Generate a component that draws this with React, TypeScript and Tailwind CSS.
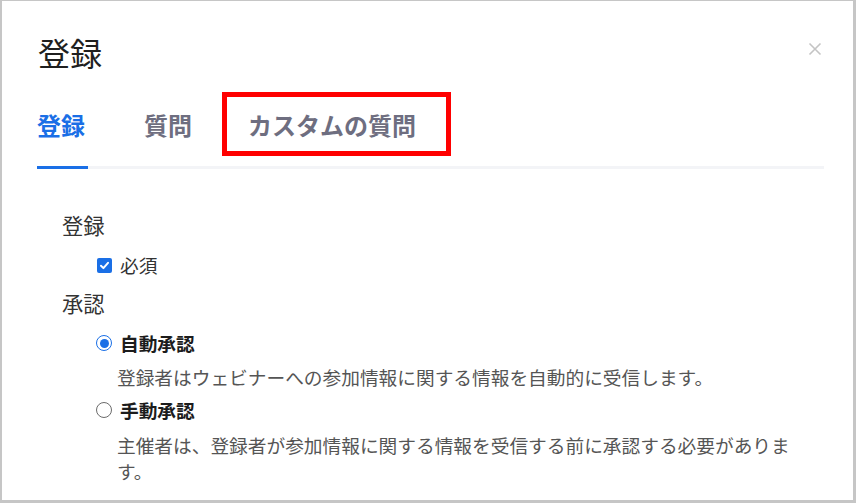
import React from 'react';

const font = "font-['Noto_Sans_CJK_JP','Noto_Sans',sans-serif]";

const CheckBox: React.FC = () => (
  <span className="w-[15px] h-[15px] rounded-[2px] bg-[#1a6fe6] flex items-center justify-center">
    <svg width="11" height="11" viewBox="0 0 10 10" fill="none" stroke="white" strokeWidth="1.8" strokeLinecap="round" strokeLinejoin="round">
      <path d="M1.8 5.2 L4 7.4 L8.2 2.6" />
    </svg>
  </span>
);

const Radio: React.FC<{ checked?: boolean }> = ({ checked }) =>
  checked ? (
    <span className="w-[16px] h-[16px] rounded-full border-[1.5px] border-[#1a6fe6] flex items-center justify-center">
      <span className="w-[9px] h-[9px] rounded-full bg-[#1a6fe6]" />
    </span>
  ) : (
    <span className="w-[16px] h-[16px] rounded-full border-[1.5px] border-[#6b6b6b]" />
  );

const App: React.FC = () => {
  return (
    <div className={`relative w-[856px] h-[503px] bg-white border-l-2 border-t border-r-[3px] border-b-[3px] border-[#c6c6c6] overflow-hidden ${font}`}>
      {/* header */}
      <div className="flex justify-between items-start pt-[27px] pl-[36px] pr-[31px]">
        <h1 className="text-[32px] leading-[48px] text-[#1f1f1f] font-normal">登録</h1>
        <svg className="mt-[14px]" width="14" height="14" viewBox="0 0 14 14" stroke="#c4c4c4" strokeWidth="1.6">
          <path d="M1.5 1.5 L12.5 12.5 M12.5 1.5 L1.5 12.5" />
        </svg>
      </div>

      {/* tabs */}
      <div className="ml-[35px] mr-[29px] mt-[31px] flex gap-[56px] border-b-[3px] border-[#f3f4f7]">
        <div className="-mb-[3px] w-[51px] pb-[23px] border-b-[3px] border-[#1a6fe6] text-[24px] leading-[36px] font-bold text-[#1a6fe6]">登録</div>
        <div className="pb-[23px] text-[24px] leading-[36px] font-bold text-[#6e6e80]">質問</div>
        <div className="pb-[23px] text-[24px] leading-[36px] font-bold text-[#6e6e80]">カスタムの質問</div>
      </div>

      {/* annotation box */}
      <div className="absolute left-[220px] top-[91px] w-[229px] h-[64px] border-[5px] border-[#ff0000]" />

      {/* content */}
      <div className="pl-[60px] mt-[40px] text-[#333]">
        <div className="text-[21.3px] leading-[32px]">登録</div>
        <div className="mt-[8px] pl-[35px] h-[32px] flex items-center gap-[8px] text-[18.7px]">
          <CheckBox />
          <span>必須</span>
        </div>
        <div className="mt-[6px] text-[21.3px] leading-[32px]">承認</div>
        <div className="mt-[10px] pl-[34px] h-[28px] flex items-center gap-[8px] text-[18.7px] font-bold text-[#1c1c1c]">
          <Radio checked />
          <span>自動承認</span>
        </div>
        <div className="mt-[6px] pl-[55px] text-[18.7px] leading-[27px] text-[#555]">
          登録者はウェビナーへの参加情報に関する情報を自動的に受信します。
        </div>
        <div className="mt-[6px] pl-[34px] h-[28px] flex items-center gap-[8px] text-[18.7px] font-bold text-[#1c1c1c]">
          <Radio />
          <span>手動承認</span>
        </div>
        <div className="mt-[8px] pl-[55px] w-[740px] text-[18.7px] leading-[26px] text-[#555]">
          主催者は、登録者が参加情報に関する情報を受信する前に承認する必要があります。
        </div>
      </div>
    </div>
  );
};

export default App;
